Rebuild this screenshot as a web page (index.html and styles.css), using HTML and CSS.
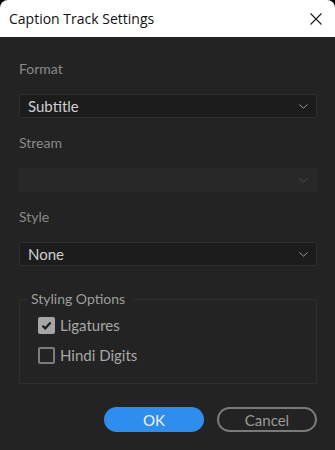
FILE: index.html
```html
<!DOCTYPE html>
<html>
<head>
<meta charset="utf-8">
<link rel="stylesheet" href="styles.css">
</head>
<body>
<div class="window">
  <div class="titlebar">
    <span class="title">Caption Track Settings</span>
    <button class="close" aria-label="Close">
      <svg width="12" height="12" viewBox="0 0 12 12"><path d="M0.5 0.5L11.5 11.5M11.5 0.5L0.5 11.5" stroke="#1a1a1a" stroke-width="1.1" fill="none"/></svg>
    </button>
  </div>
  <div class="content">
    <div class="field">
      <div class="label">Format</div>
      <div class="select">
        <span class="value">Subtitle</span>
        <svg class="chev" width="9" height="5" viewBox="0 0 9 5"><path d="M0.5 0.5L4.5 4.2L8.5 0.5" stroke="#9a9a9a" stroke-width="1" fill="none"/></svg>
      </div>
    </div>
    <div class="field">
      <div class="label">Stream</div>
      <div class="select disabled">
        <span class="value"></span>
        <svg class="chev" width="9" height="5" viewBox="0 0 9 5"><path d="M0.5 0.5L4.5 4.2L8.5 0.5" stroke="#4a4a4a" stroke-width="1" fill="none"/></svg>
      </div>
    </div>
    <div class="field">
      <div class="label">Style</div>
      <div class="select">
        <span class="value">None</span>
        <svg class="chev" width="9" height="5" viewBox="0 0 9 5"><path d="M0.5 0.5L4.5 4.2L8.5 0.5" stroke="#9a9a9a" stroke-width="1" fill="none"/></svg>
      </div>
    </div>
    <fieldset class="group">
      <legend>Styling Options</legend>
      <div class="check-row">
        <span class="box checked">
          <svg width="13" height="13" viewBox="0 0 13 13"><path d="M2.5 6.8L5.2 9.4L10.6 3.4" stroke="#1e1e1e" stroke-width="2.2" fill="none"/></svg>
        </span>
        <span class="check-label">Ligatures</span>
      </div>
      <div class="check-row">
        <span class="box"></span>
        <span class="check-label">Hindi Digits</span>
      </div>
    </fieldset>
    <div class="actions">
      <button class="btn primary">OK</button>
      <button class="btn secondary">Cancel</button>
    </div>
  </div>
</div>
</body>
</html>
```
FILE: styles.css
```css
html, body {
  margin: 0;
  padding: 0;
  background: #000;
}
.window {
  width: 335px;
  height: 450px;
  background: #232323;
  border-radius: 8px 8px 0 0;
  overflow: hidden;
  display: flex;
  flex-direction: column;
  font-family: "Lato", "Noto Sans", sans-serif;
}
.titlebar {
  height: 37px;
  background: #ffffff;
  display: flex;
  align-items: center;
  justify-content: space-between;
  padding: 0 13px 0 9px;
  box-sizing: border-box;
}
.title {
  font-family: "Open Sans", "Noto Sans", sans-serif;
  font-size: 14px;
  color: #111;
  line-height: 18px;
}
.close {
  background: none;
  border: 0;
  padding: 0;
  width: 12px;
  height: 12px;
  display: flex;
}
.content {
  padding: 23px 18px 0 19px;
  display: flex;
  flex-direction: column;
}
.field {
  display: flex;
  flex-direction: column;
  gap: 16px;
  margin-bottom: 16px;
}
.label {
  font-size: 14px;
  line-height: 18px;
  color: #8a8a8a;
}
.select {
  height: 24px;
  box-sizing: border-box;
  background: #1c1c1c;
  border: 1px solid #303030;
  border-radius: 2px;
  display: flex;
  align-items: center;
  justify-content: space-between;
  padding: 0 8px 0 8px;
}
.select .value {
  font-size: 15px;
  color: #cfcfcf;
}
.select.disabled {
  background: #282828;
  border-color: #282828;
}
.group {
  margin: 8px 0 0 0;
  border: 1px solid #2f2f2f;
  padding: 8px 12px 19px 18px;
  display: flex;
  flex-direction: column;
  gap: 12px;
}
.group legend {
  margin-left: -10px;
  padding: 0 8px 0 3px;
  font-size: 14px;
  line-height: 18px;
  color: #9e9e9e;
}
.check-row {
  display: flex;
  align-items: center;
  height: 18px;
  gap: 5px;
}
.box {
  width: 17px;
  height: 17px;
  box-sizing: border-box;
  border: 2px solid #7c7c7c;
  border-radius: 2px;
  display: flex;
  align-items: center;
  justify-content: center;
}
.box.checked {
  background: #a6a6a6;
  border-color: #a6a6a6;
}
.check-label {
  font-size: 15px;
  color: #a8a8a8;
}
.actions {
  margin-top: 23px;
  display: flex;
  justify-content: flex-end;
  gap: 13px;
}
.btn {
  width: 100px;
  height: 25px;
  border-radius: 13px;
  font-family: "Lato", "Noto Sans", sans-serif;
  font-size: 15px;
  padding: 0;
  box-sizing: border-box;
}
.btn.primary {
  background: #2e8ded;
  border: 0;
  color: #f2f2f2;
}
.btn.secondary {
  background: transparent;
  border: 2px solid #7a7a7a;
  color: #9a9a9a;
}
```
